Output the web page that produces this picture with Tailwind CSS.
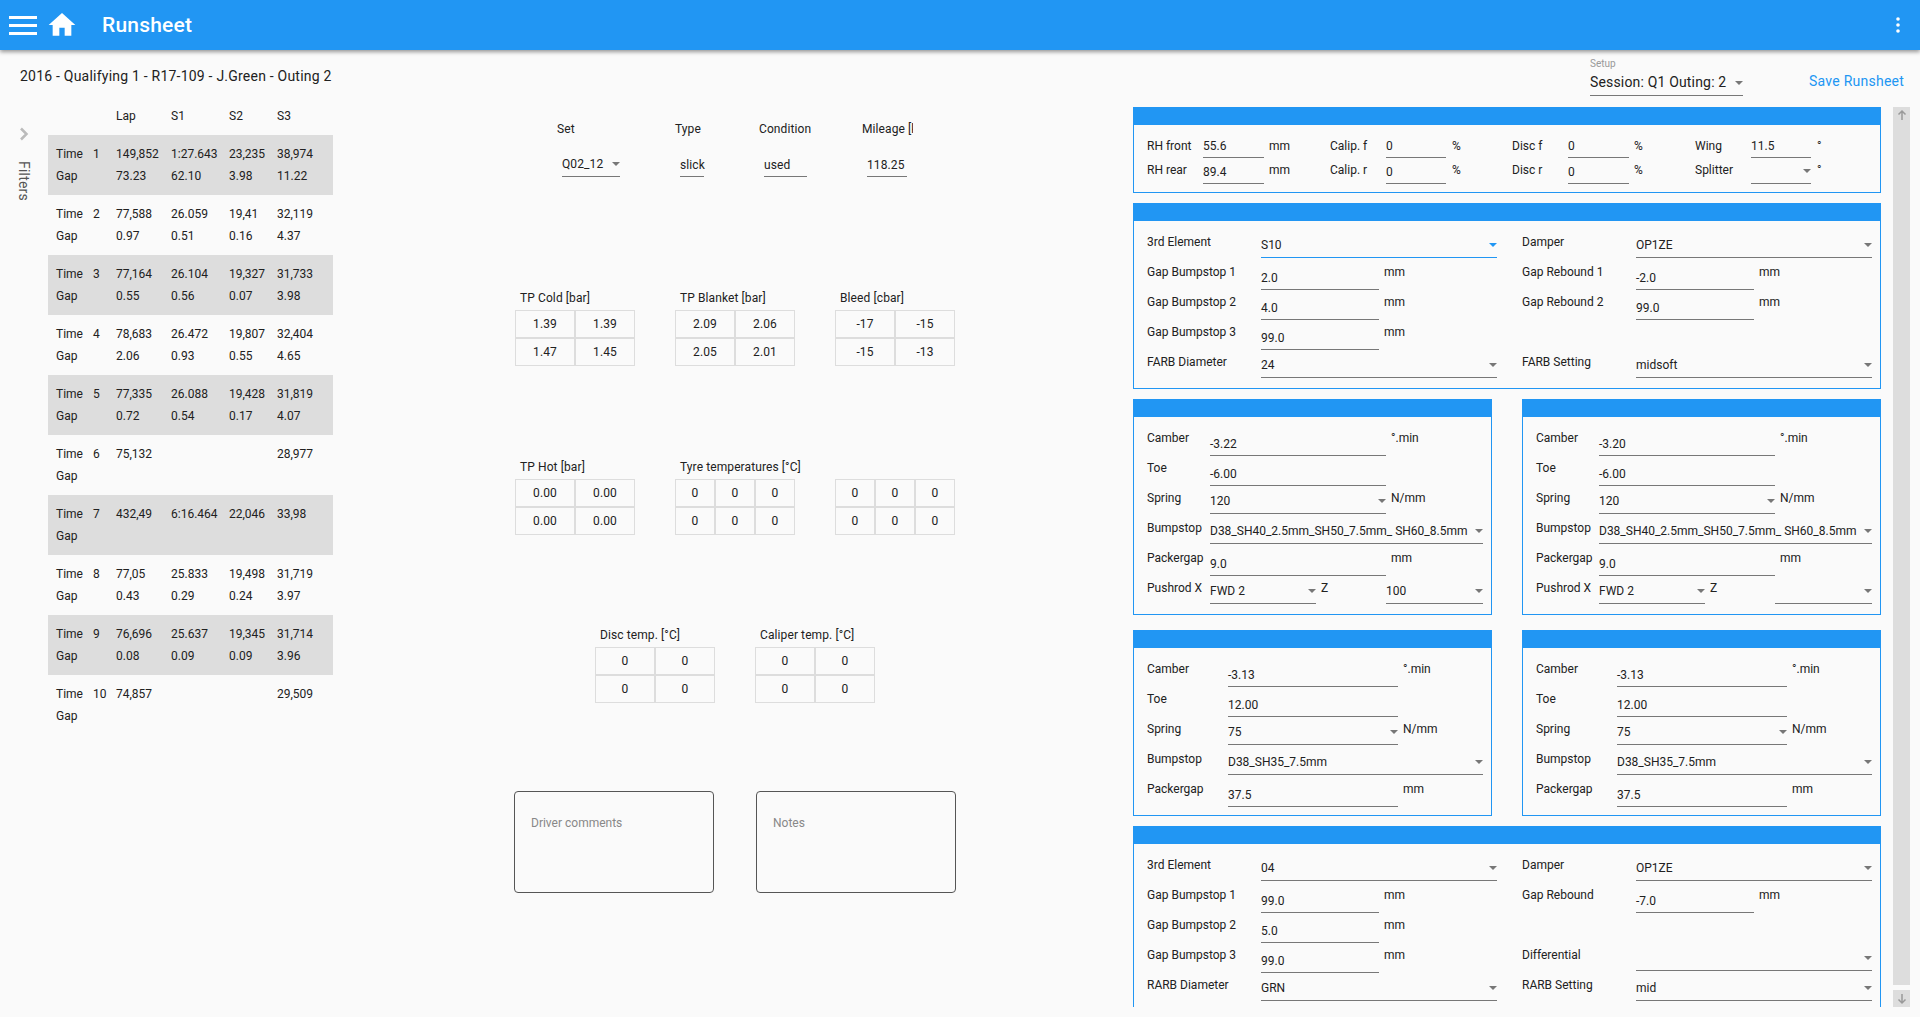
<!DOCTYPE html>
<html lang="en">
<head>
<meta charset="utf-8">
<title>Runsheet</title>
<script src="https://cdn.jsdelivr.net/npm/@tailwindcss/browser@4"></script>
</head>
<body class="w-[1920px] h-[1017px] overflow-hidden bg-[#fafafa] text-[#212121] text-[12px] font-['Roboto',sans-serif]">
<header class="relative z-10 flex items-center h-[50px] bg-[#2196f3] text-white shadow-[0_2px_4px_rgba(0,0,0,0.4)]">
  <div class="flex flex-col gap-[5px] ml-[9px] w-[28px]">
    <div class="h-[3px] bg-white"></div><div class="h-[3px] bg-white"></div><div class="h-[3px] bg-white"></div>
  </div>
  <svg class="ml-[9px] w-[32px] h-[32px]" viewBox="0 0 24 24" fill="#fff"><path d="M10 20v-6h4v6h5v-8h3L12 3 2 12h3v8z"/></svg>
  <div class="ml-[24px] text-[21px] tracking-[0.2px] font-medium leading-[28px]">Runsheet</div>
  <svg class="ml-auto mr-[10px] w-[24px] h-[24px]" viewBox="0 0 24 24" fill="#fff"><circle cx="12" cy="6" r="1.8"/><circle cx="12" cy="12" r="1.8"/><circle cx="12" cy="18" r="1.8"/></svg>
</header>
<main class="flex items-start h-[967px]">
  <section class="w-[515px] shrink-0 pt-[16px]">
    <div class="pl-[20px] text-[14px] tracking-[0.22px] leading-[20px]">2016 - Qualifying 1 - R17-109 - J.Green - Outing 2</div>
    <div class="flex mt-[19px]">
      <div class="w-[48px] shrink-0 flex flex-col items-center text-[#555]">
        <svg class="mt-[22px] w-[12px] h-[14px]" viewBox="0 0 12 14" fill="none" stroke="#bbb" stroke-width="2.5"><path d="M3 1.5 8.5 7 3 12.5"/></svg>
        <div class="mt-[20px] text-[14px] tracking-[0.2px] leading-[14px] [writing-mode:vertical-rl]">Filters</div>
      </div>
      <div class="w-[285px] leading-[22px]">
        <div class="grid grid-cols-[68px_55px_58px_48px_56px] h-[30px] content-start"><span></span><span>Lap</span><span>S1</span><span>S2</span><span>S3</span></div>
        <div class="grid grid-cols-[8px_37px_23px_55px_58px_48px_56px] content-start h-[60px] pt-[8px] bg-[#ddd]"><span></span><span>Time</span><span>1</span><span>149,852</span><span>1:27.643</span><span>23,235</span><span>38,974</span><span></span><span>Gap</span><span></span><span>73.23</span><span>62.10</span><span>3.98</span><span>11.22</span></div>
        <div class="grid grid-cols-[8px_37px_23px_55px_58px_48px_56px] content-start h-[60px] pt-[8px]"><span></span><span>Time</span><span>2</span><span>77,588</span><span>26.059</span><span>19,41</span><span>32,119</span><span></span><span>Gap</span><span></span><span>0.97</span><span>0.51</span><span>0.16</span><span>4.37</span></div>
        <div class="grid grid-cols-[8px_37px_23px_55px_58px_48px_56px] content-start h-[60px] pt-[8px] bg-[#ddd]"><span></span><span>Time</span><span>3</span><span>77,164</span><span>26.104</span><span>19,327</span><span>31,733</span><span></span><span>Gap</span><span></span><span>0.55</span><span>0.56</span><span>0.07</span><span>3.98</span></div>
        <div class="grid grid-cols-[8px_37px_23px_55px_58px_48px_56px] content-start h-[60px] pt-[8px]"><span></span><span>Time</span><span>4</span><span>78,683</span><span>26.472</span><span>19,807</span><span>32,404</span><span></span><span>Gap</span><span></span><span>2.06</span><span>0.93</span><span>0.55</span><span>4.65</span></div>
        <div class="grid grid-cols-[8px_37px_23px_55px_58px_48px_56px] content-start h-[60px] pt-[8px] bg-[#ddd]"><span></span><span>Time</span><span>5</span><span>77,335</span><span>26.088</span><span>19,428</span><span>31,819</span><span></span><span>Gap</span><span></span><span>0.72</span><span>0.54</span><span>0.17</span><span>4.07</span></div>
        <div class="grid grid-cols-[8px_37px_23px_55px_58px_48px_56px] content-start h-[60px] pt-[8px]"><span></span><span>Time</span><span>6</span><span>75,132</span><span></span><span></span><span>28,977</span><span></span><span>Gap</span></div>
        <div class="grid grid-cols-[8px_37px_23px_55px_58px_48px_56px] content-start h-[60px] pt-[8px] bg-[#ddd]"><span></span><span>Time</span><span>7</span><span>432,49</span><span>6:16.464</span><span>22,046</span><span>33,98</span><span></span><span>Gap</span></div>
        <div class="grid grid-cols-[8px_37px_23px_55px_58px_48px_56px] content-start h-[60px] pt-[8px]"><span></span><span>Time</span><span>8</span><span>77,05</span><span>25.833</span><span>19,498</span><span>31,719</span><span></span><span>Gap</span><span></span><span>0.43</span><span>0.29</span><span>0.24</span><span>3.97</span></div>
        <div class="grid grid-cols-[8px_37px_23px_55px_58px_48px_56px] content-start h-[60px] pt-[8px] bg-[#ddd]"><span></span><span>Time</span><span>9</span><span>76,696</span><span>25.637</span><span>19,345</span><span>31,714</span><span></span><span>Gap</span><span></span><span>0.08</span><span>0.09</span><span>0.09</span><span>3.96</span></div>
        <div class="grid grid-cols-[8px_37px_23px_55px_58px_48px_56px] content-start h-[60px] pt-[8px]"><span></span><span>Time</span><span>10</span><span>74,857</span><span></span><span></span><span>29,509</span><span></span><span>Gap</span></div>
      </div>
    </div>
  </section>

  <section class="w-[618px] shrink-0 pt-[69px] tracking-[0.1px]">
    <div class="flex pl-[42px]">
      <div class="w-[118px]"><div class="leading-[20px]">Set</div><div class="flex justify-between items-center ml-[5px] mt-[15px] w-[58px] h-[23px] pb-[2px] border-b border-[#777]"><span>Q02_12</span><span class="border-x-[4px] border-t-[4px] border-x-transparent border-t-[#777]"></span></div></div>
      <div class="w-[84px]"><div class="leading-[20px]">Type</div><div class="ml-[5px] mt-[15px] w-[24px] h-[23px] leading-[22px] border-b border-[#777]">slick</div></div>
      <div class="w-[103px]"><div class="leading-[20px]">Condition</div><div class="ml-[5px] mt-[15px] w-[43px] h-[23px] leading-[22px] border-b border-[#777]">used</div></div>
      <div class="w-[51px]"><div class="leading-[20px] overflow-hidden whitespace-nowrap">Mileage [km]</div><div class="ml-[5px] mt-[15px] w-[40px] h-[23px] leading-[22px] border-b border-[#777]">118.25</div></div>
    </div>

    <div class="flex mt-[111px]">
      <div class="w-[160px]"><div class="pl-[5px] leading-[20px] mb-[2px]">TP Cold [bar]</div>
        <div class="grid grid-cols-2 w-[120px] text-center leading-[26px]"><div class="h-[28px] border border-[#ddd]">1.39</div><div class="h-[28px] border border-[#ddd]">1.39</div><div class="h-[28px] border border-[#ddd]">1.47</div><div class="h-[28px] border border-[#ddd]">1.45</div></div></div>
      <div class="w-[160px]"><div class="pl-[5px] leading-[20px] mb-[2px]">TP Blanket [bar]</div>
        <div class="grid grid-cols-2 w-[120px] text-center leading-[26px]"><div class="h-[28px] border border-[#ddd]">2.09</div><div class="h-[28px] border border-[#ddd]">2.06</div><div class="h-[28px] border border-[#ddd]">2.05</div><div class="h-[28px] border border-[#ddd]">2.01</div></div></div>
      <div class="w-[160px]"><div class="pl-[5px] leading-[20px] mb-[2px]">Bleed [cbar]</div>
        <div class="grid grid-cols-2 w-[120px] text-center leading-[26px]"><div class="h-[28px] border border-[#ddd]">-17</div><div class="h-[28px] border border-[#ddd]">-15</div><div class="h-[28px] border border-[#ddd]">-15</div><div class="h-[28px] border border-[#ddd]">-13</div></div></div>
    </div>

    <div class="flex mt-[91px]">
      <div class="w-[160px]"><div class="pl-[5px] leading-[20px] mb-[2px]">TP Hot [bar]</div>
        <div class="grid grid-cols-2 w-[120px] text-center leading-[26px]"><div class="h-[28px] border border-[#ddd]">0.00</div><div class="h-[28px] border border-[#ddd]">0.00</div><div class="h-[28px] border border-[#ddd]">0.00</div><div class="h-[28px] border border-[#ddd]">0.00</div></div></div>
      <div class="w-[160px]"><div class="pl-[5px] leading-[20px] mb-[2px] whitespace-nowrap">Tyre temperatures [°C]</div>
        <div class="grid grid-cols-3 w-[120px] text-center leading-[26px]"><div class="h-[28px] border border-[#ddd]">0</div><div class="h-[28px] border border-[#ddd]">0</div><div class="h-[28px] border border-[#ddd]">0</div><div class="h-[28px] border border-[#ddd]">0</div><div class="h-[28px] border border-[#ddd]">0</div><div class="h-[28px] border border-[#ddd]">0</div></div></div>
      <div class="w-[160px]"><div class="h-[20px] mb-[2px]"></div>
        <div class="grid grid-cols-3 w-[120px] text-center leading-[26px]"><div class="h-[28px] border border-[#ddd]">0</div><div class="h-[28px] border border-[#ddd]">0</div><div class="h-[28px] border border-[#ddd]">0</div><div class="h-[28px] border border-[#ddd]">0</div><div class="h-[28px] border border-[#ddd]">0</div><div class="h-[28px] border border-[#ddd]">0</div></div></div>
    </div>

    <div class="flex mt-[90px] ml-[80px]">
      <div class="w-[160px]"><div class="pl-[5px] leading-[20px] mb-[2px]">Disc temp. [°C]</div>
        <div class="grid grid-cols-2 w-[120px] text-center leading-[26px]"><div class="h-[28px] border border-[#ddd]">0</div><div class="h-[28px] border border-[#ddd]">0</div><div class="h-[28px] border border-[#ddd]">0</div><div class="h-[28px] border border-[#ddd]">0</div></div></div>
      <div class="w-[160px]"><div class="pl-[5px] leading-[20px] mb-[2px]">Caliper temp. [°C]</div>
        <div class="grid grid-cols-2 w-[120px] text-center leading-[26px]"><div class="h-[28px] border border-[#ddd]">0</div><div class="h-[28px] border border-[#ddd]">0</div><div class="h-[28px] border border-[#ddd]">0</div><div class="h-[28px] border border-[#ddd]">0</div></div></div>
    </div>

    <div class="flex gap-[42px] mt-[88px] ml-[-1px]">
      <div class="w-[200px] h-[102px] border border-[#555] rounded-[4px] pl-[16px] pt-[23px] leading-[16px] tracking-normal text-[#888]">Driver comments</div>
      <div class="w-[200px] h-[102px] border border-[#555] rounded-[4px] pl-[16px] pt-[23px] leading-[16px] tracking-normal text-[#888]">Notes</div>
    </div>
  </section>

  <section class="w-[787px] shrink-0">
    <div class="flex h-[57px] pt-[8px] pl-[457px]">
      <div class="w-[153px]">
        <div class="text-[10px] leading-[12px] text-[#999]">Setup</div>
        <div class="flex justify-between items-center mt-[3px] h-[23px] pb-[3px] border-b border-[#777] text-[14px] tracking-[0.17px]"><span>Session: Q1 Outing: 2</span><span class="border-x-[4px] border-t-[4px] border-x-transparent border-t-[#777]"></span></div>
      </div>
      <div class="ml-[66px] mt-[13px] text-[14px] tracking-[0.25px] leading-[20px] text-[#2196f3]">Save Runsheet</div>
    </div>
    <div class="flex items-start">
      <div class="w-[748px] h-[900px] overflow-hidden">

        <div class="border border-[#2196f3]">
          <div class="h-[17px] bg-[#2196f3]"></div>
          <div class="pl-[13px] pb-[8px]">
            <div class="flex items-end h-[33px]">
              <div class="flex items-end w-[183px]"><div class="w-[56px] leading-[14px] mb-[5px]">RH front</div><div class="w-[61px] h-[23px] leading-[22px] border-b border-[#777]">55.6</div><div class="ml-[5px] leading-[14px] mb-[5px]">mm</div></div>
              <div class="flex items-end w-[182px]"><div class="w-[56px] leading-[14px] mb-[5px]">Calip. f</div><div class="w-[60px] h-[23px] leading-[22px] border-b border-[#777]">0</div><div class="ml-[6px] leading-[14px] mb-[5px]">%</div></div>
              <div class="flex items-end w-[183px]"><div class="w-[56px] leading-[14px] mb-[5px]">Disc f</div><div class="w-[61px] h-[23px] leading-[22px] border-b border-[#777]">0</div><div class="ml-[5px] leading-[14px] mb-[5px]">%</div></div>
              <div class="flex items-end"><div class="w-[56px] leading-[14px] mb-[5px]">Wing</div><div class="w-[60px] h-[23px] leading-[22px] border-b border-[#777]">11.5</div><div class="ml-[6px] leading-[14px] mb-[5px]">°</div></div>
            </div>
            <div class="flex items-end h-[26px]">
              <div class="flex items-end w-[183px]"><div class="w-[56px] leading-[14px] mb-[7px]">RH rear</div><div class="w-[61px] h-[23px] leading-[22px] border-b border-[#777]">89.4</div><div class="ml-[5px] leading-[14px] mb-[7px]">mm</div></div>
              <div class="flex items-end w-[182px]"><div class="w-[56px] leading-[14px] mb-[7px]">Calip. r</div><div class="w-[60px] h-[23px] leading-[22px] border-b border-[#777]">0</div><div class="ml-[6px] leading-[14px] mb-[7px]">%</div></div>
              <div class="flex items-end w-[183px]"><div class="w-[56px] leading-[14px] mb-[7px]">Disc r</div><div class="w-[61px] h-[23px] leading-[22px] border-b border-[#777]">0</div><div class="ml-[5px] leading-[14px] mb-[7px]">%</div></div>
              <div class="flex items-end"><div class="w-[56px] leading-[14px] mb-[7px]">Splitter</div><div class="flex justify-end items-center w-[60px] h-[23px] pb-[2px] border-b border-[#777]"><span class="border-x-[4px] border-t-[4px] border-x-transparent border-t-[#777]"></span></div><div class="ml-[6px] leading-[14px] mb-[7px]">°</div></div>
            </div>
          </div>
        </div>

        <div class="mt-[10px] border border-[#2196f3]">
          <div class="h-[17px] bg-[#2196f3]"></div>
          <div class="pl-[13px] pb-[10px]">
            <div class="flex items-end h-[37px]">
              <div class="flex items-end w-[375px]"><div class="w-[114px] leading-[14px] mb-[9px]">3rd Element</div><div class="flex justify-between items-center w-[236px] h-[23px] pb-[2px] border-b border-[#2196f3]"><span>S10</span><span class="border-x-[4px] border-t-[4px] border-x-transparent border-t-[#2196f3]"></span></div></div>
              <div class="flex items-end"><div class="w-[114px] leading-[14px] mb-[9px]">Damper</div><div class="flex justify-between items-center w-[236px] h-[23px] pb-[2px] border-b border-[#777]"><span>OP1ZE</span><span class="border-x-[4px] border-t-[4px] border-x-transparent border-t-[#777]"></span></div></div>
            </div>
            <div class="flex items-end h-[32px]">
              <div class="flex items-end w-[375px]"><div class="w-[114px] leading-[14px] mb-[11px]">Gap Bumpstop 1</div><div class="w-[118px] h-[23px] leading-[22px] border-b border-[#777]">2.0</div><div class="ml-[5px] leading-[14px] mb-[11px]">mm</div></div>
              <div class="flex items-end"><div class="w-[114px] leading-[14px] mb-[11px]">Gap Rebound 1</div><div class="w-[118px] h-[23px] leading-[22px] border-b border-[#777]">-2.0</div><div class="ml-[5px] leading-[14px] mb-[11px]">mm</div></div>
            </div>
            <div class="flex items-end h-[30px]">
              <div class="flex items-end w-[375px]"><div class="w-[114px] leading-[14px] mb-[11px]">Gap Bumpstop 2</div><div class="w-[118px] h-[23px] leading-[22px] border-b border-[#777]">4.0</div><div class="ml-[5px] leading-[14px] mb-[11px]">mm</div></div>
              <div class="flex items-end"><div class="w-[114px] leading-[14px] mb-[11px]">Gap Rebound 2</div><div class="w-[118px] h-[23px] leading-[22px] border-b border-[#777]">99.0</div><div class="ml-[5px] leading-[14px] mb-[11px]">mm</div></div>
            </div>
            <div class="flex items-end h-[30px]">
              <div class="flex items-end w-[375px]"><div class="w-[114px] leading-[14px] mb-[11px]">Gap Bumpstop 3</div><div class="w-[118px] h-[23px] leading-[22px] border-b border-[#777]">99.0</div><div class="ml-[5px] leading-[14px] mb-[11px]">mm</div></div>
            </div>
            <div class="flex items-end h-[28px]">
              <div class="flex items-end w-[375px]"><div class="w-[114px] leading-[14px] mb-[9px]">FARB Diameter</div><div class="flex justify-between items-center w-[236px] h-[23px] pb-[2px] border-b border-[#777]"><span>24</span><span class="border-x-[4px] border-t-[4px] border-x-transparent border-t-[#777]"></span></div></div>
              <div class="flex items-end"><div class="w-[114px] leading-[14px] mb-[9px]">FARB Setting</div><div class="flex justify-between items-center w-[236px] h-[23px] pb-[2px] border-b border-[#777]"><span>midsoft</span><span class="border-x-[4px] border-t-[4px] border-x-transparent border-t-[#777]"></span></div></div>
            </div>
          </div>
        </div>

        <div class="flex gap-[30px] mt-[10px]">
          <div class="w-[359px] border border-[#2196f3]">
            <div class="h-[17px] bg-[#2196f3]"></div>
            <div class="pl-[13px] pb-[10px]">
              <div class="flex items-end h-[39px]"><div class="w-[63px] leading-[14px] mb-[11px]">Camber</div><div class="w-[176px] h-[23px] leading-[22px] border-b border-[#777]">-3.22</div><div class="ml-[5px] leading-[14px] mb-[11px]">°.min</div></div>
              <div class="flex items-end h-[30px]"><div class="w-[63px] leading-[14px] mb-[11px]">Toe</div><div class="w-[176px] h-[23px] leading-[22px] border-b border-[#777]">-6.00</div></div>
              <div class="flex items-end h-[28px]"><div class="w-[63px] leading-[14px] mb-[9px]">Spring</div><div class="flex justify-between items-center w-[176px] h-[23px] pb-[2px] border-b border-[#777]"><span>120</span><span class="border-x-[4px] border-t-[4px] border-x-transparent border-t-[#777]"></span></div><div class="ml-[5px] leading-[14px] mb-[9px]">N/mm</div></div>
              <div class="flex items-end h-[30px]"><div class="w-[63px] leading-[14px] mb-[9px]">Bumpstop</div><div class="flex justify-between items-center w-[273px] h-[23px] pb-[2px] border-b border-[#777] whitespace-nowrap"><span>D38_SH40_2.5mm_SH50_7.5mm_ SH60_8.5mm</span><span class="border-x-[4px] border-t-[4px] border-x-transparent border-t-[#777]"></span></div></div>
              <div class="flex items-end h-[32px]"><div class="w-[63px] leading-[14px] mb-[11px]">Packergap</div><div class="w-[176px] h-[23px] leading-[22px] border-b border-[#777]">9.0</div><div class="ml-[5px] leading-[14px] mb-[11px]">mm</div></div>
              <div class="flex items-end h-[28px]"><div class="w-[63px] leading-[14px] mb-[9px]">Pushrod X</div><div class="flex justify-between items-center w-[106px] h-[23px] pb-[2px] border-b border-[#777]"><span>FWD 2</span><span class="border-x-[4px] border-t-[4px] border-x-transparent border-t-[#777]"></span></div><div class="w-[70px] pl-[5px] leading-[14px] mb-[9px]">Z</div><div class="flex justify-between items-center w-[97px] h-[23px] pb-[2px] border-b border-[#777]"><span>100</span><span class="border-x-[4px] border-t-[4px] border-x-transparent border-t-[#777]"></span></div></div>
            </div>
          </div>
          <div class="w-[359px] border border-[#2196f3]">
            <div class="h-[17px] bg-[#2196f3]"></div>
            <div class="pl-[13px] pb-[10px]">
              <div class="flex items-end h-[39px]"><div class="w-[63px] leading-[14px] mb-[11px]">Camber</div><div class="w-[176px] h-[23px] leading-[22px] border-b border-[#777]">-3.20</div><div class="ml-[5px] leading-[14px] mb-[11px]">°.min</div></div>
              <div class="flex items-end h-[30px]"><div class="w-[63px] leading-[14px] mb-[11px]">Toe</div><div class="w-[176px] h-[23px] leading-[22px] border-b border-[#777]">-6.00</div></div>
              <div class="flex items-end h-[28px]"><div class="w-[63px] leading-[14px] mb-[9px]">Spring</div><div class="flex justify-between items-center w-[176px] h-[23px] pb-[2px] border-b border-[#777]"><span>120</span><span class="border-x-[4px] border-t-[4px] border-x-transparent border-t-[#777]"></span></div><div class="ml-[5px] leading-[14px] mb-[9px]">N/mm</div></div>
              <div class="flex items-end h-[30px]"><div class="w-[63px] leading-[14px] mb-[9px]">Bumpstop</div><div class="flex justify-between items-center w-[273px] h-[23px] pb-[2px] border-b border-[#777] whitespace-nowrap"><span>D38_SH40_2.5mm_SH50_7.5mm_ SH60_8.5mm</span><span class="border-x-[4px] border-t-[4px] border-x-transparent border-t-[#777]"></span></div></div>
              <div class="flex items-end h-[32px]"><div class="w-[63px] leading-[14px] mb-[11px]">Packergap</div><div class="w-[176px] h-[23px] leading-[22px] border-b border-[#777]">9.0</div><div class="ml-[5px] leading-[14px] mb-[11px]">mm</div></div>
              <div class="flex items-end h-[28px]"><div class="w-[63px] leading-[14px] mb-[9px]">Pushrod X</div><div class="flex justify-between items-center w-[106px] h-[23px] pb-[2px] border-b border-[#777]"><span>FWD 2</span><span class="border-x-[4px] border-t-[4px] border-x-transparent border-t-[#777]"></span></div><div class="w-[70px] pl-[5px] leading-[14px] mb-[9px]">Z</div><div class="flex justify-end items-center w-[97px] h-[23px] pb-[2px] border-b border-[#777]"><span class="border-x-[4px] border-t-[4px] border-x-transparent border-t-[#777]"></span></div></div>
            </div>
          </div>
        </div>

        <div class="flex gap-[30px] mt-[15px]">
          <div class="w-[359px] border border-[#2196f3]">
            <div class="h-[17px] bg-[#2196f3]"></div>
            <div class="pl-[13px] pb-[8px]">
              <div class="flex items-end h-[39px]"><div class="w-[81px] leading-[14px] mb-[11px]">Camber</div><div class="w-[170px] h-[23px] leading-[22px] border-b border-[#777]">-3.13</div><div class="ml-[5px] leading-[14px] mb-[11px]">°.min</div></div>
              <div class="flex items-end h-[30px]"><div class="w-[81px] leading-[14px] mb-[11px]">Toe</div><div class="w-[170px] h-[23px] leading-[22px] border-b border-[#777]">12.00</div></div>
              <div class="flex items-end h-[28px]"><div class="w-[81px] leading-[14px] mb-[9px]">Spring</div><div class="flex justify-between items-center w-[170px] h-[23px] pb-[2px] border-b border-[#777]"><span>75</span><span class="border-x-[4px] border-t-[4px] border-x-transparent border-t-[#777]"></span></div><div class="ml-[5px] leading-[14px] mb-[9px]">N/mm</div></div>
              <div class="flex items-end h-[30px]"><div class="w-[81px] leading-[14px] mb-[9px]">Bumpstop</div><div class="flex justify-between items-center w-[255px] h-[23px] pb-[2px] border-b border-[#777]"><span>D38_SH35_7.5mm</span><span class="border-x-[4px] border-t-[4px] border-x-transparent border-t-[#777]"></span></div></div>
              <div class="flex items-end h-[32px]"><div class="w-[81px] leading-[14px] mb-[11px]">Packergap</div><div class="w-[170px] h-[23px] leading-[22px] border-b border-[#777]">37.5</div><div class="ml-[5px] leading-[14px] mb-[11px]">mm</div></div>
            </div>
          </div>
          <div class="w-[359px] border border-[#2196f3]">
            <div class="h-[17px] bg-[#2196f3]"></div>
            <div class="pl-[13px] pb-[8px]">
              <div class="flex items-end h-[39px]"><div class="w-[81px] leading-[14px] mb-[11px]">Camber</div><div class="w-[170px] h-[23px] leading-[22px] border-b border-[#777]">-3.13</div><div class="ml-[5px] leading-[14px] mb-[11px]">°.min</div></div>
              <div class="flex items-end h-[30px]"><div class="w-[81px] leading-[14px] mb-[11px]">Toe</div><div class="w-[170px] h-[23px] leading-[22px] border-b border-[#777]">12.00</div></div>
              <div class="flex items-end h-[28px]"><div class="w-[81px] leading-[14px] mb-[9px]">Spring</div><div class="flex justify-between items-center w-[170px] h-[23px] pb-[2px] border-b border-[#777]"><span>75</span><span class="border-x-[4px] border-t-[4px] border-x-transparent border-t-[#777]"></span></div><div class="ml-[5px] leading-[14px] mb-[9px]">N/mm</div></div>
              <div class="flex items-end h-[30px]"><div class="w-[81px] leading-[14px] mb-[9px]">Bumpstop</div><div class="flex justify-between items-center w-[255px] h-[23px] pb-[2px] border-b border-[#777]"><span>D38_SH35_7.5mm</span><span class="border-x-[4px] border-t-[4px] border-x-transparent border-t-[#777]"></span></div></div>
              <div class="flex items-end h-[32px]"><div class="w-[81px] leading-[14px] mb-[11px]">Packergap</div><div class="w-[170px] h-[23px] leading-[22px] border-b border-[#777]">37.5</div><div class="ml-[5px] leading-[14px] mb-[11px]">mm</div></div>
            </div>
          </div>
        </div>

        <div class="mt-[10px] border border-[#2196f3]">
          <div class="h-[17px] bg-[#2196f3]"></div>
          <div class="pl-[13px] pb-[10px]">
            <div class="flex items-end h-[37px]">
              <div class="flex items-end w-[375px]"><div class="w-[114px] leading-[14px] mb-[9px]">3rd Element</div><div class="flex justify-between items-center w-[236px] h-[23px] pb-[2px] border-b border-[#777]"><span>04</span><span class="border-x-[4px] border-t-[4px] border-x-transparent border-t-[#777]"></span></div></div>
              <div class="flex items-end"><div class="w-[114px] leading-[14px] mb-[9px]">Damper</div><div class="flex justify-between items-center w-[236px] h-[23px] pb-[2px] border-b border-[#777]"><span>OP1ZE</span><span class="border-x-[4px] border-t-[4px] border-x-transparent border-t-[#777]"></span></div></div>
            </div>
            <div class="flex items-end h-[32px]">
              <div class="flex items-end w-[375px]"><div class="w-[114px] leading-[14px] mb-[11px]">Gap Bumpstop 1</div><div class="w-[118px] h-[23px] leading-[22px] border-b border-[#777]">99.0</div><div class="ml-[5px] leading-[14px] mb-[11px]">mm</div></div>
              <div class="flex items-end"><div class="w-[114px] leading-[14px] mb-[11px]">Gap Rebound</div><div class="w-[118px] h-[23px] leading-[22px] border-b border-[#777]">-7.0</div><div class="ml-[5px] leading-[14px] mb-[11px]">mm</div></div>
            </div>
            <div class="flex items-end h-[30px]">
              <div class="flex items-end w-[375px]"><div class="w-[114px] leading-[14px] mb-[11px]">Gap Bumpstop 2</div><div class="w-[118px] h-[23px] leading-[22px] border-b border-[#777]">5.0</div><div class="ml-[5px] leading-[14px] mb-[11px]">mm</div></div>
            </div>
            <div class="flex items-end h-[30px]">
              <div class="flex items-end w-[375px]"><div class="w-[114px] leading-[14px] mb-[11px]">Gap Bumpstop 3</div><div class="w-[118px] h-[23px] leading-[22px] border-b border-[#777]">99.0</div><div class="ml-[5px] leading-[14px] mb-[11px]">mm</div></div>
              <div class="flex items-end"><div class="w-[114px] leading-[14px] mb-[11px]">Differential</div><div class="flex justify-end items-center w-[236px] h-[23px] pb-[2px] mb-[2px] border-b border-[#777]"><span class="border-x-[4px] border-t-[4px] border-x-transparent border-t-[#777]"></span></div></div>
            </div>
            <div class="flex items-end h-[28px]">
              <div class="flex items-end w-[375px]"><div class="w-[114px] leading-[14px] mb-[9px]">RARB Diameter</div><div class="flex justify-between items-center w-[236px] h-[23px] pb-[2px] border-b border-[#777]"><span>GRN</span><span class="border-x-[4px] border-t-[4px] border-x-transparent border-t-[#777]"></span></div></div>
              <div class="flex items-end"><div class="w-[114px] leading-[14px] mb-[9px]">RARB Setting</div><div class="flex justify-between items-center w-[236px] h-[23px] pb-[2px] border-b border-[#777]"><span>mid</span><span class="border-x-[4px] border-t-[4px] border-x-transparent border-t-[#777]"></span></div></div>
            </div>
          </div>
        </div>

      </div>
      <div class="ml-[12px] w-[17px] h-[900px] flex flex-col text-[#999]">
        <div class="flex-1 bg-[#ddd] flex justify-center pt-[2px]"><svg class="w-[12px] h-[12px]" viewBox="0 0 12 12" fill="none" stroke="#999" stroke-width="1.5"><path d="M6 11V2M2.5 5.5 6 2l3.5 3.5"/></svg></div>
        <div class="mt-[5px] h-[17px] bg-[#ddd] flex justify-center pt-[3px]"><svg class="w-[12px] h-[12px]" viewBox="0 0 12 12" fill="none" stroke="#999" stroke-width="1.5"><path d="M6 1v9M2.5 6.5 6 10l3.5-3.5"/></svg></div>
      </div>
    </div>
  </section>
</main>
</body>
</html>
